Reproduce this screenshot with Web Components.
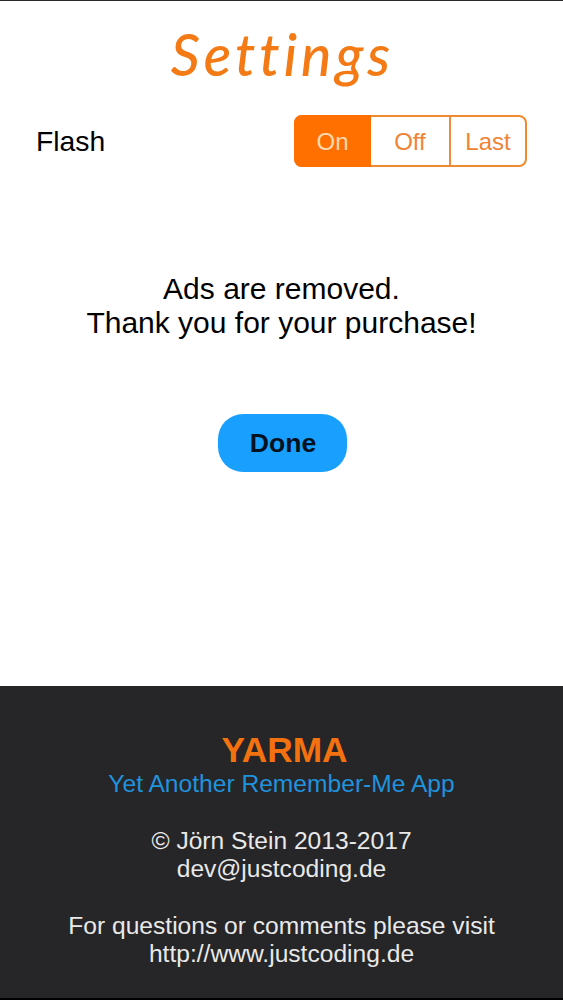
<!DOCTYPE html>
<html><head><meta charset="utf-8"><title>Settings</title>
<style>
html,body{margin:0;padding:0;background:#fff}
body{width:563px;height:1000px;overflow:hidden;font-family:"Liberation Sans",Arial,sans-serif}
</style></head><body>
<yarma-app>
  <yarma-title slot="title">Settings</yarma-title>
  <yarma-flash slot="flash"></yarma-flash>
  <yarma-message slot="message">Ads are removed.<br>Thank you for your purchase!</yarma-message>
  <yarma-button slot="action">Done</yarma-button>
  <yarma-footer slot="footer"></yarma-footer>
</yarma-app>
<script>
function def(name,css,html){
  customElements.define(name,class extends HTMLElement{
    constructor(){super();this.attachShadow({mode:'open'}).innerHTML='<style>'+css+'</style>'+html;}
  });
}
def('yarma-app',`
:host{display:flex;flex-direction:column;width:563px;height:1000px;box-sizing:border-box;border-top:1px solid #2b2b2b;background:#fff}
main{flex:1;display:flex;flex-direction:column;min-height:0}
.foot{height:314px;flex:none}
`,`<main><slot name="title"></slot><slot name="flash"></slot><slot name="message"></slot><slot name="action"></slot></main><div class="foot"><slot name="footer"></slot></div>`);
def('yarma-title',`
:host{display:block;height:114px;box-sizing:border-box;padding:20px 0 0 2px;text-align:center;color:#f47a16;font:italic 500 57px/66px Lato,"Open Sans",sans-serif;letter-spacing:4px}
`,`<slot></slot>`);
def('yarma-flash',`
:host{display:flex;align-items:center;justify-content:space-between;height:52px;padding:0 36px;color:#000;font-size:28.3px}
.seg{display:flex;width:233px;height:52px;box-sizing:border-box;border:2px solid #f08a30;border-radius:8px;font-size:24px;color:#ef8336;background:#fff}
.seg span{display:flex;align-items:center;justify-content:center;box-sizing:border-box;height:100%;padding-top:1px}
.on{flex:none;width:77px;height:52px!important;margin:-2px 0 -2px -2px;border-radius:8px 0 0 8px;background:#ff7000;color:#ffd9b0}
.off{width:80px;border-right:2px solid #ee8a3c}
.last{flex:1}
`,`<span>Flash</span><div class="seg"><span class="on">On</span><span class="off">Off</span><span class="last">Last</span></div>`);
def('yarma-message',`
:host{display:block;margin-top:105px;text-align:center;color:#000;font-size:30px;line-height:34px}
`,`<slot></slot>`);
def('yarma-button',`
:host{display:flex;align-self:center;align-items:center;justify-content:center;margin:74px 0 0 1px;padding-left:2px;box-sizing:border-box;width:129px;height:58px;border-radius:25px;background:#19a0ff;color:#04121f;font-size:26.6px;font-weight:700}
`,`<slot></slot>`);
def('yarma-footer',`
:host{display:flex;flex-direction:column;align-items:center;box-sizing:border-box;height:314px;padding-top:46px;border-bottom:2px solid #000;background:#262527;color:#e9e9e9;font-size:24.6px;line-height:28px;text-align:center}
.brand{color:#f4710f;font-size:35.3px;font-weight:700;line-height:36px;padding-left:6px}
.tag{color:#1f93dd;line-height:32px}
.b1{margin-top:27px}
.b2{margin-top:29px}
`,`<div class="brand">YARMA</div><div class="tag">Yet Another Remember-Me App</div>
<div class="b1">© Jörn Stein 2013-2017<br>dev@justcoding.de</div>
<div class="b2">For questions or comments please visit<br>http://www.justcoding.de</div>`);
</script>
</body></html>
